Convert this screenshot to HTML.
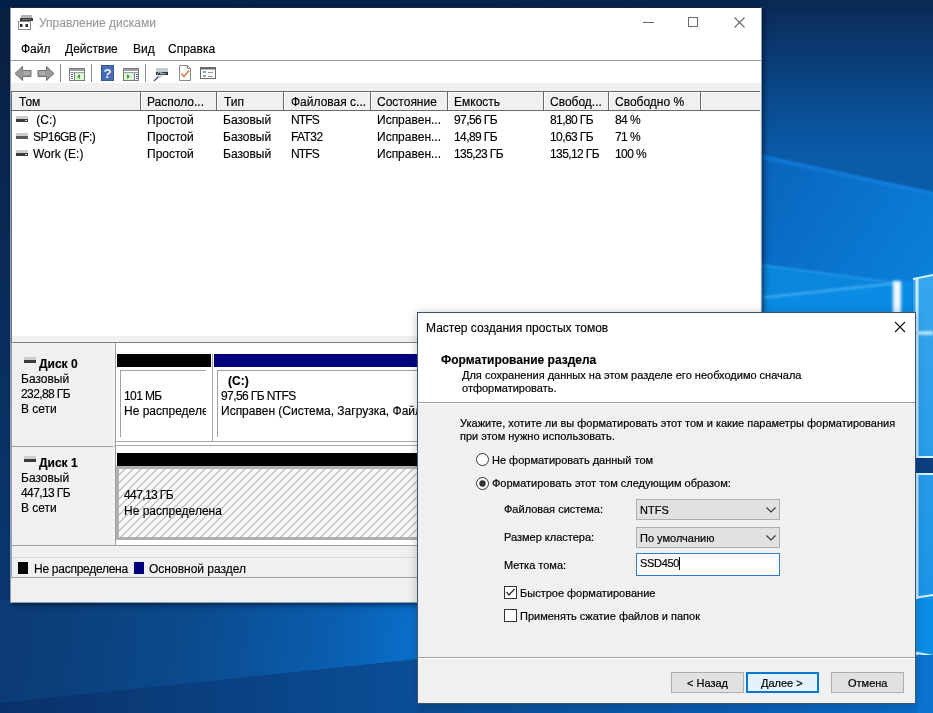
<!DOCTYPE html>
<html><head><meta charset="utf-8">
<style>
*{margin:0;padding:0;box-sizing:border-box}
html,body{width:933px;height:713px;overflow:hidden}
body{position:relative;background:#0a2a55;font-family:"Liberation Sans",sans-serif;font-size:12px;color:#000}
.a{position:absolute}
.t{position:absolute;white-space:nowrap;font-size:12px;line-height:15px;will-change:transform;-webkit-text-stroke:0.15px currentColor}
.s{position:absolute;white-space:nowrap;font-size:11px;line-height:13px;will-change:transform;-webkit-text-stroke:0.2px currentColor}
.b{font-weight:bold}
.l{position:absolute;background:#a0a0a0}
.n{letter-spacing:-0.6px}
.nt{letter-spacing:-0.9px}
</style></head><body>

<!-- BACKGROUND -->
<svg class="a" style="left:0;top:0" width="933" height="713" viewBox="0 0 933 713">
<defs>
<linearGradient id="g0" x1="0" y1="0" x2="0" y2="1">
<stop offset="0" stop-color="#0a1f3f"/><stop offset="0.45" stop-color="#0a2d5e"/><stop offset="1" stop-color="#0b3c78"/>
</linearGradient>
<linearGradient id="gTop" x1="0" y1="0" x2="1" y2="0">
<stop offset="0" stop-color="#03204a"/><stop offset="0.8" stop-color="#062550"/><stop offset="1" stop-color="#0a2a52"/>
</linearGradient>
<linearGradient id="gC" gradientUnits="userSpaceOnUse" x1="0" y1="0" x2="0" y2="192">
<stop offset="0" stop-color="#0b2850"/><stop offset="0.16" stop-color="#0b3366"/><stop offset="0.52" stop-color="#0a4a8e"/><stop offset="0.78" stop-color="#0a5aa8"/><stop offset="1" stop-color="#0a5ca8"/>
</linearGradient>
<linearGradient id="gC2" gradientUnits="userSpaceOnUse" x1="760" y1="170" x2="933" y2="290">
<stop offset="0" stop-color="#0a64bc"/><stop offset="1" stop-color="#0a82dc"/>
</linearGradient>
<linearGradient id="gE" gradientUnits="userSpaceOnUse" x1="0" y1="620" x2="420" y2="660">
<stop offset="0" stop-color="#0b3a74"/><stop offset="0.45" stop-color="#0b4a8c"/><stop offset="0.8" stop-color="#0a5eb0"/><stop offset="1" stop-color="#0a70cc"/>
</linearGradient>
<linearGradient id="gE2" gradientUnits="userSpaceOnUse" x1="0" y1="0" x2="420" y2="0">
<stop offset="0" stop-color="#0a3068"/><stop offset="1" stop-color="#0a4f98"/>
</linearGradient>
<linearGradient id="gF" gradientUnits="userSpaceOnUse" x1="417" y1="0" x2="933" y2="0">
<stop offset="0" stop-color="#0a4a8e"/><stop offset="0.6" stop-color="#0a5cb0"/><stop offset="1" stop-color="#0a6cc8"/>
</linearGradient>
<linearGradient id="gP" gradientUnits="userSpaceOnUse" x1="0" y1="275" x2="0" y2="600">
<stop offset="0" stop-color="#38a6ec"/><stop offset="0.5" stop-color="#2a9eea"/><stop offset="1" stop-color="#1a94e6"/>
</linearGradient>
<filter id="bl" x="-50%" y="-50%" width="200%" height="200%"><feGaussianBlur stdDeviation="1.5"/></filter>
<filter id="bl2" x="-50%" y="-50%" width="200%" height="200%"><feGaussianBlur stdDeviation="0.8"/></filter>
<filter id="bl3" x="-50%" y="-50%" width="200%" height="200%"><feGaussianBlur stdDeviation="4"/></filter>
</defs>
<rect width="933" height="713" fill="url(#g0)"/>
<rect x="0" y="0" width="933" height="9" fill="url(#gTop)"/>
<!-- region C -->
<rect x="760" y="0" width="173" height="200" fill="url(#gC)"/>
<polygon points="740,150 933,192 933,713 740,713" fill="url(#gC2)"/>
<line x1="740" y1="152" x2="933" y2="194" stroke="#1580de" stroke-width="4" filter="url(#bl)" opacity="0.7"/>
<polygon points="740,262 897,283 740,300" fill="#0a86dc"/>
<line x1="740" y1="262" x2="897" y2="283" stroke="#2a9cec" stroke-width="1.5" filter="url(#bl2)"/>
<polygon points="740,300 897,283 912,280 912,713 740,713" fill="#0a8ce4"/>
<line x1="740" y1="300" x2="897" y2="283" stroke="#4ab0f2" stroke-width="2" filter="url(#bl2)"/>
<rect x="893" y="281" width="8" height="40" fill="#eef8ff" filter="url(#bl)"/>
<!-- pane -->
<polygon points="913,279 933,275 933,713 913,713" fill="url(#gP)"/>
<line x1="917" y1="279" x2="917" y2="713" stroke="#c8ecff" stroke-width="3"/>
<line x1="913" y1="279" x2="933" y2="275" stroke="#d0f0ff" stroke-width="2"/>
<rect x="913" y="331" width="20" height="4" fill="#b0e0fa" filter="url(#bl2)"/>
<rect x="913" y="456" width="20" height="2" fill="#d8f2ff"/>
<rect x="913" y="458" width="20" height="15" fill="#0b3f80"/>
<rect x="913" y="473" width="20" height="2" fill="#d8f2ff"/>
<line x1="913" y1="598" x2="933" y2="595" stroke="#d8f2ff" stroke-width="2"/>
<rect x="913" y="599" width="20" height="54" fill="#0a8ee6"/>
<line x1="913" y1="652" x2="933" y2="656" stroke="#d8f2ff" stroke-width="2"/>
<rect x="913" y="655" width="20" height="60" fill="#0a74d0"/>
<!-- region E (bottom-left) -->
<polygon points="0,600 420,600 420,659 0,703" fill="url(#gE)"/>

<polygon points="0,703 420,659 420,713 0,713" fill="url(#gE2)"/>
<!-- region F -->
<rect x="417" y="700" width="500" height="13" fill="url(#gF)"/>
</svg>

<!-- DM WINDOW frame -->
<div class="a" style="left:10px;top:7px;width:752px;height:596px;background:#f0f0f0;border:1px solid #8aa0b8;border-top-color:#1a2636;box-shadow:2px 2px 5px rgba(0,10,30,0.6)"></div>
<div class="a" style="left:11px;top:8px;width:750px;height:52px;background:#fff"></div>
<div class="l" style="left:11px;top:60px;width:750px;height:1px"></div>
<div class="a" style="left:11px;top:61px;width:750px;height:22px;background:#fff"></div>
<svg class="a" style="left:17px;top:14px" width="18" height="17" viewBox="17 14 18 17">
<rect x="21" y="15" width="11" height="3" fill="#b4b4b4"/>
<rect x="20" y="18" width="13" height="3" fill="#3c3c3c"/>
<rect x="22" y="19" width="9" height="1" fill="#6a6a6a"/>
<rect x="18.5" y="21.5" width="12" height="8" fill="#fff" stroke="#8c8c8c" stroke-width="1"/>
<rect x="20" y="24" width="2.5" height="3" fill="#2e2e2e"/><rect x="25.5" y="24" width="2.5" height="3" fill="#2e2e2e"/>
</svg>
<div class="t" style="left:39px;top:16px;color:#9a9a9a">Управление дисками</div>
<div class="a" style="left:643px;top:22px;width:11px;height:1px;background:#6a6a6a"></div>
<div class="a" style="left:688px;top:17px;width:10px;height:10px;border:1px solid #6a6a6a"></div>
<svg class="a" style="left:734px;top:17px" width="11" height="11" viewBox="0 0 11 11"><path d="M0.5 0.5L10.5 10.5M10.5 0.5L0.5 10.5" stroke="#6a6a6a" stroke-width="1.1"/></svg>
<div class="t" style="left:21px;top:42px;">Файл</div>
<div class="t" style="left:65px;top:42px;">Действие</div>
<div class="t" style="left:133px;top:42px;">Вид</div>
<div class="t" style="left:168px;top:42px;">Справка</div>
<div class="a" style="left:11px;top:91px;width:749px;height:1px;background:#6a6a6a"></div>
<div class="a" style="left:11px;top:92px;width:749px;height:1px;background:#fff"></div>
<div class="a" style="left:11px;top:110px;width:749px;height:1px;background:#6a6a6a"></div>
<div class="a" style="left:11px;top:111px;width:749px;height:225px;background:#fff"></div>
<div class="a" style="left:140px;top:91px;width:1px;height:20px;background:#6a6a6a"></div><div class="a" style="left:141px;top:93px;width:1px;height:17px;background:#fff"></div>
<div class="a" style="left:216px;top:91px;width:1px;height:20px;background:#6a6a6a"></div><div class="a" style="left:217px;top:93px;width:1px;height:17px;background:#fff"></div>
<div class="a" style="left:283px;top:91px;width:1px;height:20px;background:#6a6a6a"></div><div class="a" style="left:284px;top:93px;width:1px;height:17px;background:#fff"></div>
<div class="a" style="left:370px;top:91px;width:1px;height:20px;background:#6a6a6a"></div><div class="a" style="left:371px;top:93px;width:1px;height:17px;background:#fff"></div>
<div class="a" style="left:447px;top:91px;width:1px;height:20px;background:#6a6a6a"></div><div class="a" style="left:448px;top:93px;width:1px;height:17px;background:#fff"></div>
<div class="a" style="left:543px;top:91px;width:1px;height:20px;background:#6a6a6a"></div><div class="a" style="left:544px;top:93px;width:1px;height:17px;background:#fff"></div>
<div class="a" style="left:608px;top:91px;width:1px;height:20px;background:#6a6a6a"></div><div class="a" style="left:609px;top:93px;width:1px;height:17px;background:#fff"></div>
<div class="a" style="left:700px;top:91px;width:1px;height:20px;background:#6a6a6a"></div><div class="a" style="left:701px;top:93px;width:1px;height:17px;background:#fff"></div>
<div class="t" style="left:19px;top:95px;">Том</div>
<div class="t" style="left:147px;top:95px;">Располо...</div>
<div class="t" style="left:224px;top:95px;">Тип</div>
<div class="t" style="left:291px;top:95px;">Файловая с...</div>
<div class="t" style="left:377px;top:95px;">Состояние</div>
<div class="t" style="left:454px;top:95px;">Емкость</div>
<div class="t" style="left:550px;top:95px;">Свобод...</div>
<div class="t" style="left:615px;top:95px;">Свободно %</div>
<div class="a" style="left:16px;top:116px;width:12px;height:3px;background:#cdcdcd"></div><div class="a" style="left:16px;top:119px;width:12px;height:3px;background:#3a3a3a"></div><div class="a" style="left:25px;top:120px;width:2px;height:1px;background:#cfe8c8"></div>
<div class="t" style="left:33px;top:113px;">&nbsp;(C:)</div>
<div class="t" style="left:147px;top:113px;">Простой</div>
<div class="t" style="left:223px;top:113px;">Базовый</div>
<div class="t nt" style="left:291px;top:113px;">NTFS</div>
<div class="t" style="left:377px;top:113px;">Исправен...</div>
<div class="t n" style="left:454px;top:113px;">97,56 ГБ</div>
<div class="t n" style="left:550px;top:113px;">81,80 ГБ</div>
<div class="t n" style="left:615px;top:113px;">84 %</div>
<div class="a" style="left:16px;top:133px;width:12px;height:3px;background:#cdcdcd"></div><div class="a" style="left:16px;top:136px;width:12px;height:3px;background:#585858"></div>
<div class="t n" style="left:33px;top:130px;">SP16GB (F:)</div>
<div class="t" style="left:147px;top:130px;">Простой</div>
<div class="t" style="left:223px;top:130px;">Базовый</div>
<div class="t n" style="left:291px;top:130px;">FAT32</div>
<div class="t" style="left:377px;top:130px;">Исправен...</div>
<div class="t n" style="left:454px;top:130px;">14,89 ГБ</div>
<div class="t n" style="left:550px;top:130px;">10,63 ГБ</div>
<div class="t n" style="left:615px;top:130px;">71 %</div>
<div class="a" style="left:16px;top:150px;width:12px;height:3px;background:#cdcdcd"></div><div class="a" style="left:16px;top:153px;width:12px;height:3px;background:#3a3a3a"></div><div class="a" style="left:25px;top:154px;width:2px;height:1px;background:#cfe8c8"></div>
<div class="t" style="left:33px;top:147px;">Work (E:)</div>
<div class="t" style="left:147px;top:147px;">Простой</div>
<div class="t" style="left:223px;top:147px;">Базовый</div>
<div class="t nt" style="left:291px;top:147px;">NTFS</div>
<div class="t" style="left:377px;top:147px;">Исправен...</div>
<div class="t n" style="left:454px;top:147px;">135,23 ГБ</div>
<div class="t n" style="left:550px;top:147px;">135,12 ГБ</div>
<div class="t n" style="left:615px;top:147px;">100 %</div>
<div class="a" style="left:11px;top:342px;width:749px;height:1px;background:#808080"></div>
<div class="a" style="left:116px;top:343px;width:644px;height:202px;background:#fff"></div>
<div class="l" style="left:115px;top:343px;width:1px;height:202px"></div>
<div class="l" style="left:11px;top:446px;width:104px;height:1px"></div>
<div class="l" style="left:116px;top:441px;width:644px;height:1px;background:#a8a8a8"></div>
<div class="l" style="left:116px;top:445px;width:644px;height:1px;background:#a8a8a8"></div>
<div class="a" style="left:113px;top:343px;width:1px;height:202px;background:#fafafa"></div>
<div class="l" style="left:11px;top:545px;width:749px;height:1px"></div>
<div class="l" style="left:11px;top:577px;width:749px;height:1px"></div>
<div class="l" style="left:11px;top:557px;width:749px;height:1px;background:#d8d8d8"></div>
<div class="a" style="left:24px;top:357px;width:12px;height:3px;background:#cdcdcd"></div><div class="a" style="left:24px;top:360px;width:12px;height:3px;background:#3a3a3a"></div>
<div class="t" style="left:39px;top:357px;font-weight:bold">Диск 0</div>
<div class="t" style="left:21px;top:372px;">Базовый</div>
<div class="t n" style="left:21px;top:387px;">232,88 ГБ</div>
<div class="t" style="left:21px;top:402px;">В сети</div>
<div class="a" style="left:24px;top:456px;width:12px;height:3px;background:#cdcdcd"></div><div class="a" style="left:24px;top:459px;width:12px;height:3px;background:#3a3a3a"></div>
<div class="t" style="left:39px;top:456px;font-weight:bold">Диск 1</div>
<div class="t" style="left:21px;top:471px;">Базовый</div>
<div class="t n" style="left:21px;top:486px;">447,13 ГБ</div>
<div class="t" style="left:21px;top:501px;">В сети</div>
<div class="a" style="left:117px;top:354px;width:94px;height:13px;background:#000"></div>
<div class="a" style="left:214px;top:354px;width:546px;height:13px;background:#00007f"></div>
<div class="a" style="left:212px;top:354px;width:1px;height:87px;background:#a8a8a8"></div>
<div class="a" style="left:120px;top:370px;width:86px;height:67px;border-top:1px solid #a0a0a0;border-left:1px solid #a0a0a0;background:#fff;overflow:hidden">
<div class="t n" style="left:3px;top:18px">101 МБ</div><div class="t" style="left:3px;top:33px">Не распределена</div></div>
<div class="a" style="left:217px;top:370px;width:543px;height:67px;border-top:1px solid #a0a0a0;border-left:1px solid #a0a0a0;background:#fff;overflow:hidden">
<div class="t b" style="left:10px;top:3px">(C:)</div><div class="t n" style="left:3px;top:18px">97,56 ГБ NTFS</div><div class="t" style="left:3px;top:33px">Исправен (Система, Загрузка, Файл подкачки, Аварийный дамп памяти, Основной раздел)</div></div>
<div class="a" style="left:117px;top:453px;width:643px;height:13px;background:#000"></div>
<svg class="a" style="left:116px;top:466px" width="644" height="74" viewBox="0 0 644 74">
<defs><pattern id="hat" x="4" width="8" height="8" patternUnits="userSpaceOnUse"><rect width="8" height="8" fill="#fbfbfb"/><path d="M-1 9L9 -1M-1 1L1 -1M7 9L9 7" stroke="#b4b4b4" stroke-width="1.2"/></pattern></defs>
<rect x="0" y="0" width="644" height="74" fill="#fff"/>
<rect x="3" y="3" width="641" height="68" fill="url(#hat)"/>
<rect x="1.5" y="1.5" width="660" height="71" fill="none" stroke="#b0b0b0" stroke-width="3"/>
</svg>
<div class="t n" style="left:124px;top:488px;">447,13 ГБ</div>
<div class="t" style="left:124px;top:504px;">Не распределена</div>
<div class="a" style="left:18px;top:562px;width:10px;height:12px;background:#000"></div>
<div class="a" style="left:134px;top:562px;width:10px;height:12px;background:#00007f"></div>
<div class="t" style="left:34px;top:562px;letter-spacing:-0.27px">Не распределена</div>
<div class="t" style="left:149px;top:562px;">Основной раздел</div>

<div class="a" style="left:11px;top:91px;width:1px;height:251px;background:#6a7280"></div>
<div class="a" style="left:11px;top:343px;width:1px;height:235px;background:#9aa2ac"></div>
<!-- TOOLBAR ICONS -->
<svg class="a" style="left:11px;top:61px" width="220" height="24" viewBox="11 61 220 24">
<!-- back -->
<path d="M15 73.5L22.5 66.5V70.5H31V76.5H22.5V80.5Z" fill="#9a9a9a" stroke="#6e6e6e" stroke-width="1"/>
<path d="M24 72H30M24 74H30" stroke="#bdbdbd" stroke-width="1"/>
<!-- forward -->
<path d="M54 73.5L46.5 66.5V70.5H38V76.5H46.5V80.5Z" fill="#9a9a9a" stroke="#6e6e6e" stroke-width="1"/>
<path d="M39 72H45M39 74H45" stroke="#bdbdbd" stroke-width="1"/>
<rect x="60" y="64" width="1" height="18" fill="#8a8a8a"/>
<!-- console tree -->
<rect x="69.5" y="68.5" width="15" height="12" fill="#fff" stroke="#7a7a7a"/>
<rect x="70" y="69" width="14" height="2" fill="#9aa0a8"/>
<rect x="70" y="72" width="14" height="1" fill="#9aa0a8"/>
<rect x="74" y="73" width="10" height="7" fill="#dff5d8"/>
<rect x="74" y="73" width="1" height="7" fill="#7a7a7a"/>
<rect x="71" y="74" width="2" height="1" fill="#4a6aa0"/><rect x="71" y="76" width="2" height="1" fill="#4a6aa0"/><rect x="71" y="78" width="2" height="1" fill="#4a6aa0"/>
<path d="M77 76.5L80 74V79Z" fill="#3aa03a"/>
<rect x="91" y="64" width="1" height="18" fill="#8a8a8a"/>
<!-- help -->
<rect x="101" y="65" width="13" height="16" fill="#33569e"/>
<rect x="102" y="66" width="11" height="14" fill="#4a6cb4"/>
<text x="107.5" y="78" font-family="Liberation Sans" font-weight="bold" font-size="13" fill="#e8eef8" text-anchor="middle">?</text>
<!-- action pane -->
<rect x="123.5" y="68.5" width="15" height="12" fill="#fff" stroke="#7a7a7a"/>
<rect x="124" y="69" width="14" height="2" fill="#9aa0a8"/>
<rect x="124" y="72" width="14" height="1" fill="#9aa0a8"/>
<rect x="124" y="73" width="10" height="7" fill="#dff5d8"/>
<rect x="134" y="73" width="1" height="7" fill="#7a7a7a"/>
<rect x="136" y="74" width="2" height="1" fill="#4a6aa0"/><rect x="136" y="76" width="2" height="1" fill="#4a6aa0"/><rect x="136" y="78" width="2" height="1" fill="#4a6aa0"/>
<path d="M130 76.5L127 74V79Z" fill="#3aa03a"/>
<rect x="145" y="64" width="1" height="18" fill="#8a8a8a"/>
<!-- disk + magnifier -->
<rect x="156" y="68" width="12" height="4" fill="#c4ccd0"/>
<rect x="156" y="72" width="12" height="3" fill="#243c34"/>
<rect x="160" y="73" width="6" height="1" fill="#8ab0a0"/>
<path d="M154 81L159 76" stroke="#5a5a5a" stroke-width="1.5"/>
<circle cx="160" cy="74.5" r="2.5" fill="none" stroke="#9ab8c8" stroke-width="1"/>
<!-- doc check -->
<path d="M179.5 65.5H187.5L190.5 68.5V80.5H179.5Z" fill="#fff" stroke="#8a8a8a"/>
<path d="M187.5 65.5V68.5H190.5" fill="none" stroke="#8a8a8a"/>
<path d="M181.5 73.5L184 76.5L189 70.5" fill="none" stroke="#e07848" stroke-width="1.6"/>
<!-- properties -->
<rect x="200.5" y="67.5" width="15" height="11" fill="#fff" stroke="#6a6a6a"/>
<rect x="201" y="68" width="14" height="1.5" fill="#6a6a6a"/>
<rect x="203" y="71" width="3" height="2" fill="#7aa6c8"/><rect x="203" y="75" width="3" height="2" fill="#7aa6c8"/>
<rect x="208" y="72" width="5" height="1" fill="#9a9a9a"/><rect x="208" y="76" width="5" height="1" fill="#9a9a9a"/>
</svg>

<!-- WIZARD -->
<div class="a" style="left:417px;top:312px;width:499px;height:392px;background:#f0f0f0;border:1px solid #3e5570;box-shadow:0 1px 9px rgba(20,40,70,0.28)"></div>
<div class="a" style="left:418px;top:313px;width:497px;height:89px;background:#fff"></div>
<div class="a" style="left:418px;top:402px;width:497px;height:1px;background:#a0a0a0"></div>
<div class="a" style="left:418px;top:403px;width:497px;height:1px;background:#fff"></div>
<div class="a" style="left:418px;top:657px;width:497px;height:1px;background:#a0a0a0"></div>
<div class="a" style="left:418px;top:658px;width:497px;height:1px;background:#fff"></div>
<svg class="a" style="left:894px;top:321px" width="12" height="12" viewBox="0 0 12 12"><path d="M1 1L11 11M11 1L1 11" stroke="#1a1a1a" stroke-width="1.2"/></svg>
<div class="t" style="left:426px;top:321px;">Мастер создания простых томов</div>
<div class="t" style="left:441px;top:353px;font-weight:bold">Форматирование раздела</div>
<div class="s" style="left:462px;top:369px;">Для сохранения данных на этом разделе его необходимо сначала</div>
<div class="s" style="left:462px;top:382px;">отформатировать.</div>
<div class="s" style="left:460px;top:417px;">Укажите, хотите ли вы форматировать этот том и какие параметры форматирования</div>
<div class="s" style="left:460px;top:430px;">при этом нужно использовать.</div>
<svg class="a" style="left:475px;top:452px" width="15" height="40" viewBox="0 0 15 40">
<circle cx="7.5" cy="7.5" r="6" fill="#fff" stroke="#333" stroke-width="1"/>
<circle cx="7.5" cy="31.5" r="6" fill="#fff" stroke="#333" stroke-width="1"/>
<circle cx="7.5" cy="31.5" r="3.2" fill="#333"/>
</svg>
<div class="s" style="left:492px;top:454px;">Не форматировать данный том</div>
<div class="s" style="left:492px;top:477px;">Форматировать этот том следующим образом:</div>
<div class="s" style="left:504px;top:503px;">Файловая система:</div>
<div class="s" style="left:504px;top:531px;">Размер кластера:</div>
<div class="s" style="left:504px;top:559px;">Метка тома:</div>
<div class="a" style="left:636px;top:499px;width:144px;height:21px;background:#e1e1e1;border:1px solid #adadad"></div>
<svg class="a" style="left:766px;top:507px" width="10" height="6" viewBox="0 0 10 6"><path d="M0.5 0.5L5 5L9.5 0.5" fill="none" stroke="#333" stroke-width="1.1"/></svg>
<div class="s" style="left:640px;top:504px;">NTFS</div>
<div class="a" style="left:636px;top:527px;width:144px;height:21px;background:#e1e1e1;border:1px solid #adadad"></div>
<svg class="a" style="left:766px;top:535px" width="10" height="6" viewBox="0 0 10 6"><path d="M0.5 0.5L5 5L9.5 0.5" fill="none" stroke="#333" stroke-width="1.1"/></svg>
<div class="s" style="left:640px;top:532px;">По умолчанию</div>
<div class="a" style="left:636px;top:553px;width:144px;height:23px;background:#fff;border:1px solid #2b7bd0"></div>
<div class="s" style="left:640px;top:557px;letter-spacing:-0.3px">SSD450</div>
<div class="a" style="left:679px;top:557px;width:1px;height:13px;background:#000"></div>
<svg class="a" style="left:504px;top:586px" width="14" height="37" viewBox="0 0 14 37">
<rect x="0.5" y="0.5" width="12" height="12" fill="#fff" stroke="#333" stroke-width="1"/>
<path d="M2.5 6L5 9L10.5 3" fill="none" stroke="#333" stroke-width="1.3"/>
<rect x="0.5" y="23.5" width="12" height="12" fill="#fff" stroke="#333" stroke-width="1"/>
</svg>
<div class="s" style="left:520px;top:587px;">Быстрое форматирование</div>
<div class="s" style="left:520px;top:610px;">Применять сжатие файлов и папок</div>
<div class="a" style="left:671px;top:672px;width:73px;height:21px;background:#e1e1e1;border:1px solid #adadad"></div>
<div class="a" style="left:746px;top:672px;width:73px;height:21px;background:#e5f1fb;border:2px solid #0078d7"></div>
<div class="a" style="left:831px;top:672px;width:73px;height:21px;background:#e1e1e1;border:1px solid #adadad"></div>
<div class="s" style="left:687px;top:677px;">&lt; Назад</div>
<div class="s" style="left:761px;top:677px;">Далее &gt;</div>
<div class="s" style="left:848px;top:677px;">Отмена</div>
</body></html>
